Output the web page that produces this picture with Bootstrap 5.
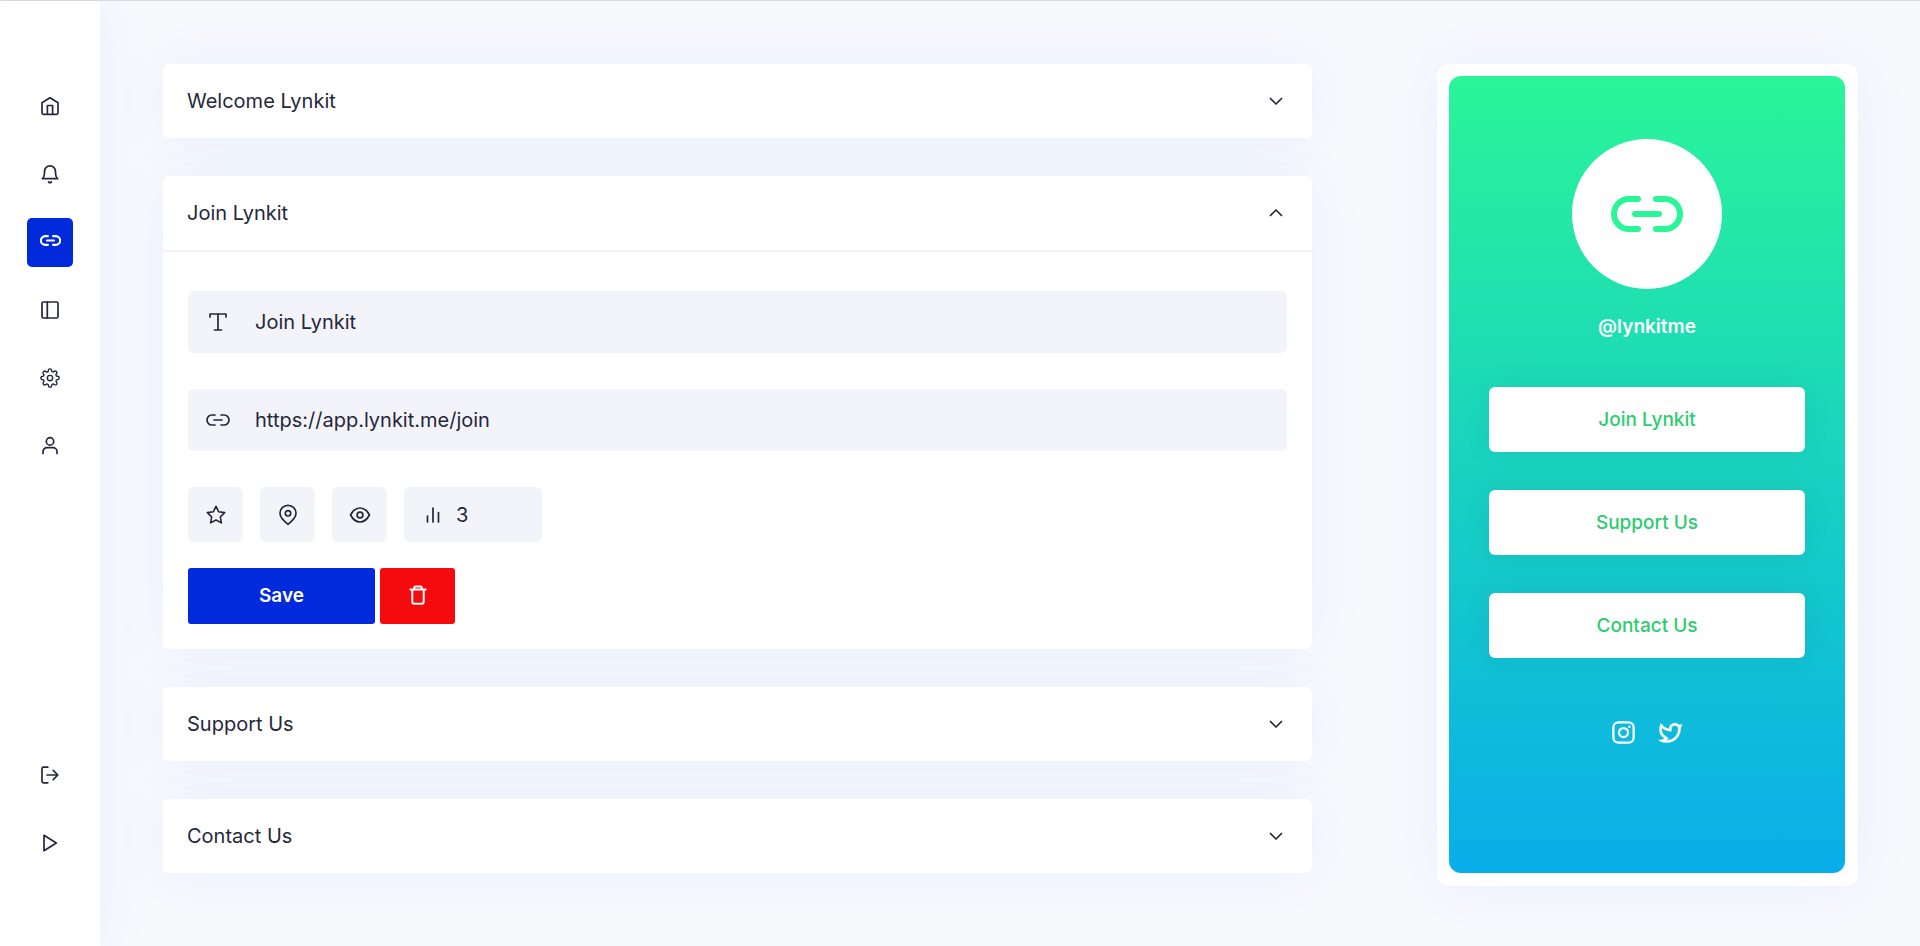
<!DOCTYPE html>
<html lang="en">
<head>
<meta charset="utf-8">
<meta name="viewport" content="width=device-width, initial-scale=1">
<title>Lynkit</title>
<link href="https://cdn.jsdelivr.net/npm/bootstrap@5.3.0/dist/css/bootstrap.min.css" rel="stylesheet">
<style>
:root { --ink: #25273a; --brand: #002adb; --field: #f3f4fa; --glow: 0 0 60px rgba(20, 80, 230, .06); }
body { background: #f7f9fd; color: var(--ink); font-family: Inter, "Liberation Sans", sans-serif; font-size: 20px; line-height: 24px; }
svg { display: block; flex: none; }
.stroke-icon { fill: none; stroke: currentColor; stroke-width: 1.7; stroke-linecap: round; stroke-linejoin: round; }
.stroke-heavy { stroke-width: 2; }
.shell { border-top: 1px solid #d9dbe2; }
.side-bar { width: 100px; flex: none; padding: 81px 0 78px; gap: 19px; background: #fff; box-shadow: var(--glow); }
.side-link { width: 46px; height: 49px; padding-bottom: 2px; border-radius: 5px; color: var(--ink); }
.side-link.active { background: var(--brand); color: #fff; padding-bottom: 4px; }
.side-link.active svg { stroke-width: 2.4; }
.workspace { padding: 63px 62px 59px 63px; gap: 125px; }
.link-list { gap: 38px; min-width: 0; }
.panel { background: #fff; border-radius: 6px; box-shadow: var(--glow); }
.panel-toggle { padding: 25px 24px 25px 24px; color: inherit; background: none; border: 0; text-align: left; }
.panel-body { border-top: 2px solid var(--field); padding: 39px 25px 25px; }
.field { height: 62px; padding: 0 18px; gap: 25px; background: var(--field); border-radius: 6px; margin-bottom: 36px; }
.field input { background: none; border: 0; padding: 0; color: inherit; outline: 0; min-width: 0; }
.tool { width: 55px; height: 55px; background: var(--field); border: 0; border-radius: 6px; color: inherit; }
.tool-row { gap: 17px; margin-bottom: 26px; }
.tool-stat { width: 138px; padding-left: 17px; gap: 11px; }
.action-row { gap: 5px; }
.action { height: 56px; border: 0; border-radius: 3px; color: #fff; font-size: 19px; }
.action-save { width: 187px; background: var(--brand); font-weight: 600; }
.action-delete { width: 75px; padding-bottom: 4px; background: #f50a0e; }
.phone { width: 421px; flex: none; padding: 12px 13px 13px 12px; background: #fff; border-radius: 12px; box-shadow: var(--glow); font-size: 19px; }
.phone-screen { min-height: 797px; padding: 63px 40px; border-radius: 12px; background: linear-gradient(0deg, #08aeea, #2af598); }
.avatar { width: 150px; height: 150px; color: #2af598; margin-bottom: 26px; }
.handle { color: #fff; font-weight: 600; margin-bottom: 48px; }
.phone-link { height: 65px; background: #fff; border-radius: 6px; color: #2ecc71; font-weight: 500; box-shadow: 0 0 30px rgba(0, 0, 0, .06); }
.phone-links { gap: 38px; margin-bottom: 61px; }
.social { gap: 20px; }
@media (max-width: 1199px) {
  .workspace { flex-direction: column; align-items: center !important; gap: 40px; padding: 40px 24px; }
  .link-list { width: 100%; }
  .phone { width: 100%; max-width: 421px; }
}
</style>
</head>
<body>
<svg width="0" height="0" class="position-absolute" aria-hidden="true">
  <symbol id="chain" viewBox="0 0 24 12"><path d="M9 1H6a5 5 0 0 0 0 10h3M15 1h3a5 5 0 0 1 0 10h-3M8 6h8"/></symbol>
  <symbol id="chevron" viewBox="0 0 24 24"><path d="M6.500 9.500l5.500 5.500 5.500-5.500"/></symbol>
</svg>
<div class="shell d-flex min-vh-100">
  <nav class="side-bar d-flex flex-column align-items-center" aria-label="Main">
    <a class="side-link d-flex align-items-center justify-content-center" href="#" aria-label="Home"><svg class="stroke-icon" width="24" height="24"><path d="M4 8.700 12 3.700l8 5V18.800a1.500 1.500 0 0 1-1.500 1.500h-13A1.500 1.500 0 0 1 4 18.800zM9.400 20.300v-8.800h5.200v8.800"/></svg></a>
    <a class="side-link d-flex align-items-center justify-content-center" href="#" aria-label="Notifications"><svg class="stroke-icon" width="24" height="24"><path d="M4.300 16.700h15.400c-1.300-1-1.900-2.200-2-4.200l-.3-3.300a5.400 5.400 0 0 0-10.800 0l-.3 3.300c-.1 2-.7 3.200-2 4.200zM10.600 20c.8.7 2 .7 2.800 0"/></svg></a>
    <a class="side-link active d-flex align-items-center justify-content-center" href="#" aria-label="Links" aria-current="page"><svg class="stroke-icon" width="21" height="11"><use href="#chain"/></svg></a>
    <a class="side-link d-flex align-items-center justify-content-center" href="#" aria-label="Layout"><svg class="stroke-icon" width="24" height="24"><rect x="4" y="4" width="16" height="16" rx="1.500"/><path d="M9.300 4v16"/></svg></a>
    <a class="side-link d-flex align-items-center justify-content-center" href="#" aria-label="Settings"><svg class="stroke-icon" width="20" height="20" viewBox="0 0 24 24"><circle cx="12" cy="12" r="3.200"/><path d="M19.400 15a1.650 1.650 0 0 0 .33 1.820l.06.06a2 2 0 1 1-2.830 2.830l-.06-.06a1.650 1.650 0 0 0-2.800 1.170V21a2 2 0 0 1-4 0v-.09A1.650 1.650 0 0 0 9 19.400a1.650 1.650 0 0 0-1.820.33l-.06.06a2 2 0 1 1-2.830-2.830l.06-.06a1.650 1.650 0 0 0-1.170-2.800H3a2 2 0 0 1 0-4h.09A1.650 1.650 0 0 0 4.600 9a1.650 1.650 0 0 0-.33-1.820l-.06-.06a2 2 0 1 1 2.830-2.830l.06.06a1.650 1.650 0 0 0 1.820.33H9a1.650 1.650 0 0 0 1-1.510V3a2 2 0 0 1 4 0v.09a1.650 1.650 0 0 0 2.820 1.170l.06-.06a2 2 0 1 1 2.830 2.830l-.06.06a1.650 1.650 0 0 0 1.170 2.820H21a2 2 0 0 1 0 4h-.09a1.650 1.650 0 0 0-1.510 1z"/></svg></a>
    <a class="side-link d-flex align-items-center justify-content-center" href="#" aria-label="Profile"><svg class="stroke-icon" width="24" height="24"><circle cx="12" cy="7.400" r="3.700"/><path d="M5 19.500v-1.800a4 4 0 0 1 4-4h6a4 4 0 0 1 4 4v1.800"/></svg></a>
    <a class="side-link mt-auto d-flex align-items-center justify-content-center" href="#" aria-label="Log out"><svg class="stroke-icon" width="24" height="24"><path d="M9.800 4.200H5.500A1.500 1.500 0 0 0 4 5.700v12.600a1.500 1.500 0 0 0 1.500 1.500h4.300M9 12h10.800M15.200 7.400l4.600 4.600-4.600 4.600"/></svg></a>
    <a class="side-link d-flex align-items-center justify-content-center" href="#" aria-label="Preview"><svg class="stroke-icon" width="24" height="24"><path d="M6 4.300v15.400L18.300 12z"/></svg></a>
  </nav>

  <main class="workspace d-flex flex-grow-1 align-items-start">
    <div class="link-list d-flex flex-column flex-grow-1">
      <section class="panel"><button type="button" class="panel-toggle w-100 d-flex justify-content-between" aria-expanded="false">Welcome Lynkit<svg class="stroke-icon" width="24" height="24"><use href="#chevron"/></svg></button></section>
      <section class="panel">
        <button type="button" class="panel-toggle w-100 d-flex justify-content-between" data-bs-toggle="collapse" data-bs-target="#join" aria-expanded="true" aria-controls="join">Join Lynkit<svg class="stroke-icon" width="24" height="24"><path d="M6.500 14.500 12 9l5.500 5.500"/></svg></button>
        <form id="join" class="collapse show">
          <div class="panel-body">
            <div class="field d-flex align-items-center">
              <label for="title" aria-label="Title"><svg class="stroke-icon" width="24" height="24"><path d="M4 7V4h16v3M12 4v16M8.500 20h7"/></svg></label>
              <input id="title" class="flex-grow-1" type="text" value="Join Lynkit">
            </div>
            <div class="field d-flex align-items-center">
              <label for="address" aria-label="Address"><svg class="stroke-icon" width="24" height="12"><use href="#chain"/></svg></label>
              <input id="address" class="flex-grow-1" type="url" value="https://app.lynkit.me/join">
            </div>
            <div class="tool-row d-flex flex-wrap">
              <button type="button" class="tool d-flex align-items-center justify-content-center" aria-label="Favourite"><svg class="stroke-icon" width="22" height="22" viewBox="0 0 24 24"><path d="M12 2.500l2.900 6 6.600.9-4.800 4.600 1.200 6.600-5.900-3.200-5.900 3.200L7.300 14 2.500 9.400l6.600-.9z"/></svg></button>
              <button type="button" class="tool d-flex align-items-center justify-content-center" aria-label="Location"><svg class="stroke-icon" width="24" height="24"><path d="M12 21.300C9 19 4 15 4 10.300a8 8 0 0 1 16 0C20 15 15 19 12 21.300z"/><circle cx="12" cy="10.300" r="2.700"/></svg></button>
              <button type="button" class="tool d-flex align-items-center justify-content-center" aria-label="Visibility"><svg class="stroke-icon" width="24" height="24"><path d="M2.600 12C5 7.200 8.500 5 12 5s7 2.200 9.400 7c-2.400 4.800-5.900 7-9.400 7s-7-2.200-9.400-7z"/><circle cx="12" cy="12" r="2.900"/></svg></button>
              <div class="tool tool-stat d-flex align-items-center"><svg class="stroke-icon" width="24" height="24"><path d="M6.500 13v6M12 5v14M17.500 9.500V19"/></svg><span>3</span></div>
            </div>
            <div class="action-row d-flex">
              <button type="submit" class="action action-save">Save</button>
              <button type="button" class="action action-delete d-flex align-items-center justify-content-center" aria-label="Delete"><svg class="stroke-icon stroke-heavy" width="24" height="24"><path d="M4.400 6.500h15.200M8.300 6.500V4.600A1.200 1.200 0 0 1 9.500 3.400h5a1.200 1.200 0 0 1 1.200 1.200v1.900M6.300 6.500v12.300a2 2 0 0 0 2 2h7.400a2 2 0 0 0 2-2V6.500"/></svg></button>
            </div>
          </div>
        </form>
      </section>
      <section class="panel"><button type="button" class="panel-toggle w-100 d-flex justify-content-between" aria-expanded="false">Support Us<svg class="stroke-icon" width="24" height="24"><use href="#chevron"/></svg></button></section>
      <section class="panel"><button type="button" class="panel-toggle w-100 d-flex justify-content-between" aria-expanded="false">Contact Us<svg class="stroke-icon" width="24" height="24"><use href="#chevron"/></svg></button></section>
    </div>

    <aside class="phone" aria-label="Page preview">
      <div class="phone-screen d-flex flex-column align-items-center">
        <div class="avatar bg-white rounded-circle d-flex align-items-center justify-content-center"><svg class="stroke-icon stroke-heavy" width="72" height="36"><use href="#chain"/></svg></div>
        <div class="handle">@lynkitme</div>
        <div class="phone-links d-flex flex-column w-100">
          <a class="phone-link d-flex align-items-center justify-content-center text-decoration-none" href="#">Join Lynkit</a>
          <a class="phone-link d-flex align-items-center justify-content-center text-decoration-none" href="#">Support Us</a>
          <a class="phone-link d-flex align-items-center justify-content-center text-decoration-none" href="#">Contact Us</a>
        </div>
        <div class="social d-flex">
          <a class="text-white" href="#" aria-label="Instagram"><svg width="27" height="27" viewBox="0 0 24 24" fill="none" stroke="currentColor" stroke-width="2"><rect x="3" y="3" width="18" height="18" rx="4.500"/><circle cx="12" cy="12" r="4"/><circle cx="17.200" cy="6.800" r="1.100" fill="currentColor" stroke="none"/></svg></a>
          <a class="text-white" href="#" aria-label="Twitter"><svg width="28" height="28" viewBox="0 0 24 24" fill="currentColor" stroke="currentColor" stroke-width=".3"><path d="M15.300 5.550a2.900 2.900 0 0 0-2.900 2.847l-.028 1.575a.6.6 0 0 1-.68.583l-1.561-.212c-2.054-.28-4.022-1.226-5.910-2.799-.598 3.310.57 5.603 3.383 7.372l1.747 1.098a.6.6 0 0 1 .034.993L7.793 18.170c.947.059 1.846.017 2.592-.131 4.718-.942 7.855-4.492 7.855-10.348 0-.478-1.012-2.141-2.940-2.141zm-4.900 2.810a4.900 4.900 0 0 1 8.385-3.355c.711-.005 1.316.175 2.669-.645-.335 1.640-.5 2.352-1.214 3.331 0 7.642-4.697 11.358-9.463 12.309-3.268.652-8.020-.419-9.382-1.841.694-.054 3.514-.357 5.144-1.550C5.160 15.700-.329 12.470 3.278 3.786c1.693 1.977 3.410 3.323 5.150 4.037 1.158.475 1.442.465 1.973.538z"/></svg></a>
        </div>
      </div>
    </aside>
  </main>
</div>
<script src="https://cdn.jsdelivr.net/npm/bootstrap@5.3.0/dist/js/bootstrap.bundle.min.js"></script>
</body>
</html>
